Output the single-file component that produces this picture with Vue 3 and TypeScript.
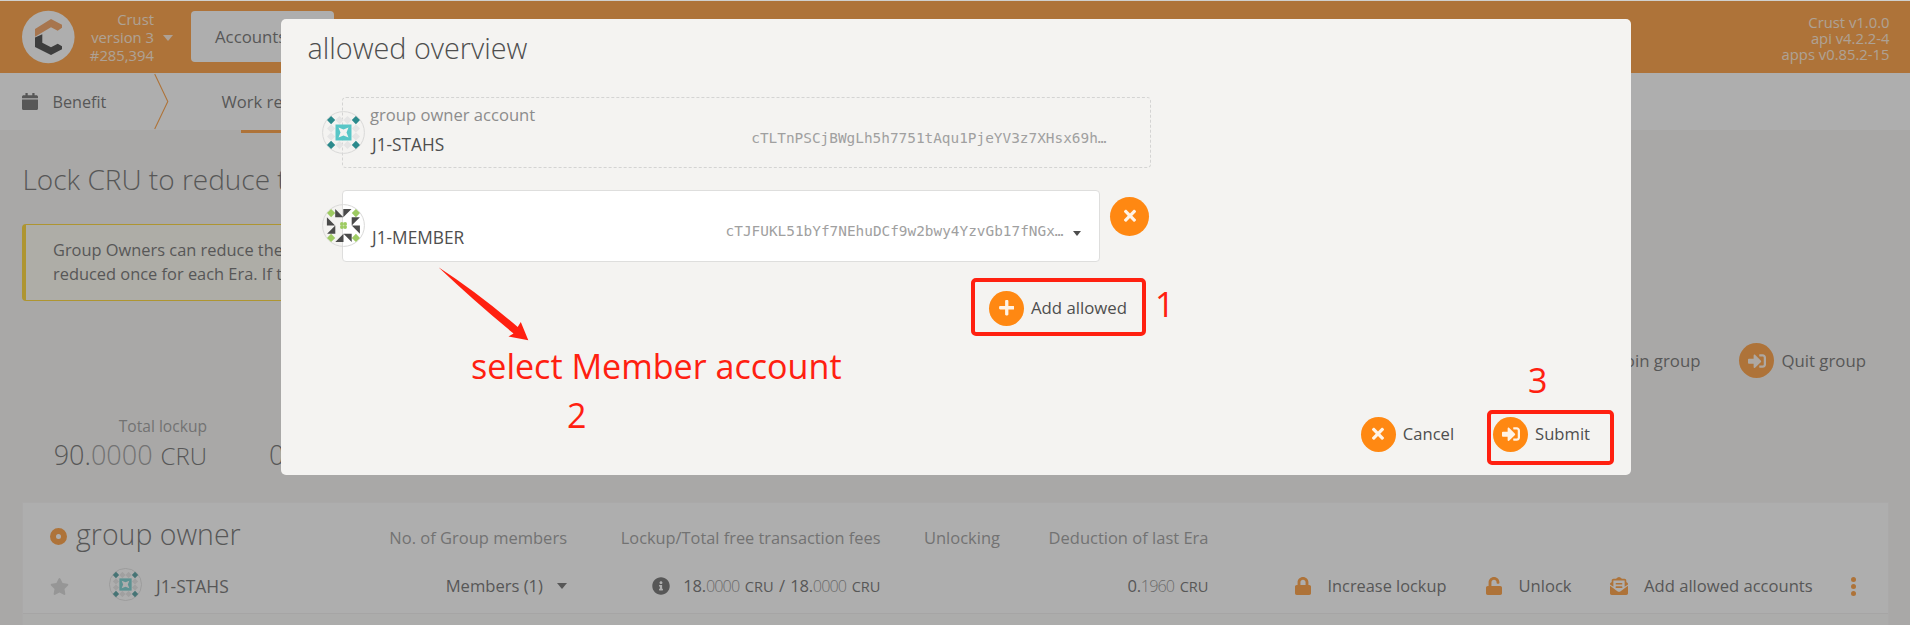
<script setup lang="ts">
interface Glyph { box: string; d: string }

const glyphs: Record<string, Glyph> = {
  lock: { box: '0 0 448 512', d: 'M400 224h-24v-72C376 68.2 307.8 0 224 0S72 68.2 72 152v72H48c-26.5 0-48 21.5-48 48v192c0 26.5 21.5 48 48 48h352c26.5 0 48-21.5 48-48V272c0-26.5-21.5-48-48-48zm-104 0H152v-72c0-39.7 32.3-72 72-72s72 32.3 72 72v72z' },
  unlock: { box: '0 0 448 512', d: 'M400 256H152V152.9c0-39.6 31.7-72.5 71.3-72.9 40-.4 72.7 32.1 72.7 72v16c0 13.3 10.7 24 24 24h32c13.3 0 24-10.7 24-24v-16C376 68 307.5-.3 223.5 0 139.5.3 72 69.5 72 153.5V256H48c-26.5 0-48 21.5-48 48v160c0 26.5 21.5 48 48 48h352c26.5 0 48-21.5 48-48V304c0-26.5-21.5-48-48-48z' },
  envelope: { box: '0 0 512 512', d: 'M176 216h160c8.84 0 16-7.16 16-16v-16c0-8.84-7.16-16-16-16H176c-8.84 0-16 7.16-16 16v16c0 8.84 7.16 16 16 16zm-16 80c0 8.84 7.16 16 16 16h160c8.84 0 16-7.16 16-16v-16c0-8.84-7.16-16-16-16H176c-8.84 0-16 7.16-16 16v16zm96 121.13c-16.42 0-32.84-5.06-46.86-15.19L0 250.86V464c0 26.51 21.49 48 48 48h416c26.51 0 48-21.49 48-48V250.86L302.86 401.94c-14.02 10.12-30.44 15.19-46.86 15.19zm237.61-254.18c-8.85-6.94-17.24-13.47-29.61-22.81V96c0-26.51-21.49-48-48-48h-77.55c-3.04-2.2-5.87-4.26-9.04-6.56C312.6 29.17 279.2-.35 256 0c-23.2-.35-56.59 29.17-73.41 41.44-3.17 2.3-6 4.36-9.04 6.56H96c-26.51 0-48 21.49-48 48v44.14c-12.37 9.33-20.76 15.87-29.61 22.81A47.995 47.995 0 0 0 0 200.72v10.65l96 69.35V96h320v184.72l96-69.35v-10.65c0-14.74-6.78-28.67-18.39-37.77z' },
  signIn: { box: '0 0 512 512', d: 'M416 448h-84c-6.6 0-12-5.4-12-12v-40c0-6.6 5.4-12 12-12h84c17.7 0 32-14.3 32-32V160c0-17.7-14.3-32-32-32h-84c-6.6 0-12-5.4-12-12V76c0-6.6 5.4-12 12-12h84c53 0 96 43 96 96v192c0 53-43 96-96 96zm-47-201L201 79c-15-15-41-4.5-41 17v96H24c-13.3 0-24 10.7-24 24v96c0 13.3 10.7 24 24 24h136v96c0 21.5 26 32 41 17l168-168c9.3-9.4 9.3-24.6 0-34z' },
  times: { box: '0 0 352 512', d: 'M242.72 256l100.07-100.07c12.28-12.28 12.28-32.19 0-44.48l-22.24-22.24c-12.28-12.28-32.19-12.28-44.48 0L176 189.28 75.93 89.21c-12.28-12.28-32.19-12.28-44.48 0L9.21 111.45c-12.28 12.28-12.28 32.19 0 44.48L109.28 256 9.21 356.07c-12.28 12.28-12.28 32.19 0 44.48l22.24 22.24c12.28 12.28 32.2 12.28 44.48 0L176 322.72l100.07 100.07c12.28 12.28 32.2 12.28 44.48 0l22.24-22.24c12.28-12.28 12.28-32.19 0-44.48L242.72 256z' },
  plus: { box: '0 0 448 512', d: 'M416 208H272V64c0-17.67-14.33-32-32-32h-32c-17.67 0-32 14.33-32 32v144H32c-17.67 0-32 14.33-32 32v32c0 17.67 14.33 32 32 32h144v144c0 17.67 14.33 32 32 32h32c17.67 0 32-14.33 32-32V304h144c17.67 0 32-14.33 32-32v-32c0-17.67-14.33-32-32-32z' },
  info: { box: '0 0 512 512', d: 'M256 8C119.043 8 8 119.083 8 256c0 136.997 111.043 248 248 248s248-111.003 248-248C504 119.083 392.957 8 256 8zm0 110c23.196 0 42 18.804 42 42s-18.804 42-42 42-42-18.804-42-42 18.804-42 42-42zm56 254c0 6.627-5.373 12-12 12h-88c-6.627 0-12-5.373-12-12v-24c0-6.627 5.373-12 12-12h12v-64h-12c-6.627 0-12-5.373-12-12v-24c0-6.627 5.373-12 12-12h64c6.627 0 12 5.373 12 12v100h12c6.627 0 12 5.373 12 12v24z' },
  star: { box: '0 0 576 512', d: 'M259.3 17.8L194 150.2 47.9 171.5c-26.2 3.8-36.7 36.1-17.7 54.6l105.7 103-25 145.5c-4.5 26.3 23.2 46 46.4 33.7L288 439.6l130.7 68.7c23.2 12.2 50.9-7.4 46.4-33.7l-25-145.5 105.7-103c19-18.5 8.5-50.8-17.7-54.6L382 150.2 316.7 17.8c-11.7-23.6-45.6-23.9-57.4 0z' },
  calendar: { box: '0 0 448 512', d: 'M12 192h424c6.6 0 12 5.4 12 12v260c0 26.5-21.5 48-48 48H48c-26.5 0-48-21.5-48-48V204c0-6.6 5.4-12 12-12zm436-44v-36c0-26.5-21.5-48-48-48h-48V12c0-6.6-5.4-12-12-12h-40c-6.6 0-12 5.4-12 12v52H160V12c0-6.6-5.4-12-12-12h-40c-6.6 0-12 5.4-12 12v52H48C21.5 64 0 85.5 0 112v36c0 6.6 5.4 12 12 12h424c6.6 0 12-5.4 12-12z' }
}

const corners = [[-12.4, -12.4], [12.4, -12.4], [-12.4, 12.4], [12.4, 12.4]]
const edges = [[-4, -12.4], [4, -12.4], [-4, 12.4], [4, 12.4], [-12.4, -4], [-12.4, 4], [12.4, -4], [12.4, 4]]
const diamond = ([x, y]: number[]) => `M${x} ${y - 4.1}L${x + 4.1} ${y}L${x} ${y + 4.1}L${x - 4.1} ${y}Z`
const cornerPath = corners.map(diamond).join('')
const edgePath = edges.map(diamond).join('')
</script>

<template>
  <div class="page">
    <div class="strip"></div>
    <header class="header">
      <svg class="logo" viewBox="0 0 54 54">
        <circle cx="27.3" cy="27" r="26.3" fill="#fff" />
        <path d="M14 19L30 9L41 14.7V17.7L36.7 20.7L30 17.3L14 26.7Z" fill="#f08c3c" />
        <path d="M14 27.5L21.3 24.3V32.7L30 37.3L36.7 33.7L41 36.3V39.3L30 45L14 37Z" fill="#1a1a1a" />
      </svg>
      <div class="chain"><span>Crust</span><span>version 3</span><span>#285,394</span></div>
      <i class="caret caret-light"></i>
      <div class="nav">Accounts</div>
      <div class="versions"><span>Crust v1.0.0</span><span>api v4.2.2-4</span><span>apps v0.85.2-15</span></div>
    </header>
    <nav class="tabs">
      <svg class="ico calendar" :viewBox="glyphs.calendar.box" preserveAspectRatio="none"><path :d="glyphs.calendar.d" /></svg>
      <span class="benefit">Benefit</span>
      <svg class="chevron" viewBox="0 0 15 57"><path d="M.7 1L13.8 28.5L.7 56" fill="none" stroke="#ff8812" stroke-width="1.1" /></svg>
      <span class="work">Work report</span>
    </nav>
    <h1>Lock CRU to reduce the fee</h1>
    <div class="notice">Group Owners can reduce the fee<br />reduced once for each Era. If the</div>
    <div class="actions">
      <span class="act"><b class="disc"><svg class="g-in" :viewBox="glyphs.signIn.box"><path :d="glyphs.signIn.d" /></svg></b>Join group</span>
      <span class="act"><b class="disc"><svg class="g-in" :viewBox="glyphs.signIn.box"><path :d="glyphs.signIn.d" /></svg></b>Quit group</span>
    </div>
    <div class="totals">
      <div class="total"><span class="label">Total lockup</span><span class="big">90.<i>0000</i><em>CRU</em></span></div>
      <div class="total second"><span class="label">Fees</span><span class="big">0.<i>0000</i><em>CRU</em></span></div>
    </div>
    <section class="card">
      <div class="row head">
        <div class="owner"><i class="ring"></i><span>group owner</span></div>
        <div>No. of Group members</div>
        <div class="fees">Lockup/Total free transaction fees</div>
        <div>Unlocking</div>
        <div>Deduction of last Era</div>
        <div></div>
      </div>
      <div class="row body">
        <div class="account">
          <svg class="ico star" :viewBox="glyphs.star.box"><path :d="glyphs.star.d" /></svg>
          <svg class="ident small" viewBox="-21.5 -21.5 43 43">
            <circle r="20.9" fill="none" stroke="#cfcfcf" />
            <path :d="edgePath" fill="#e3e3e3" /><path :d="cornerPath" fill="#2b8a8c" />
            <path d="M-8-8H8V8H-8Z" fill="#58c6c7" /><path d="M-5-5L0-3L5-5L3 0L5 5L0 3L-5 5L-3 0Z" fill="#fff" />
          </svg>
          <span class="name">J1-STAHS</span>
        </div>
        <div class="members">Members (1)<i class="caret"></i></div>
        <div class="amount"><svg class="ico info" :viewBox="glyphs.info.box"><path :d="glyphs.info.d" /></svg>18.<i>0000</i><em>CRU</em><span class="slash"> / </span>18.<i>0000</i><em>CRU</em></div>
        <div></div>
        <div class="amount">0.<i>1960</i><em>CRU</em></div>
        <div class="ops">
          <span class="op lock"><svg :viewBox="glyphs.lock.box" preserveAspectRatio="none"><path :d="glyphs.lock.d" /></svg>Increase lockup</span>
          <span class="op unlock"><svg :viewBox="glyphs.unlock.box" preserveAspectRatio="none"><path :d="glyphs.unlock.d" /></svg>Unlock</span>
          <span class="op mail"><svg :viewBox="glyphs.envelope.box"><path :d="glyphs.envelope.d" /></svg>Add allowed accounts</span>
          <span class="dots"><i></i><i></i><i></i></span>
        </div>
      </div>
      <div class="row next"></div>
    </section>
    <div class="dimmer"></div>

    <div class="modal">
      <h2>allowed overview</h2>
      <div class="field fixed">
        <svg class="ident" viewBox="-21.5 -21.5 43 43">
          <circle r="20.9" fill="none" stroke="#d9d9d8" />
          <path :d="edgePath" fill="#e5e5e5" /><path :d="cornerPath" fill="#2b8a8c" />
          <path d="M-8-8H8V8H-8Z" fill="#58c6c7" /><path d="M-5-5L0-3L5-5L3 0L5 5L0 3L-5 5L-3 0Z" fill="#f4f3f1" />
        </svg>
        <div class="who"><label>group owner account</label><span>J1-STAHS</span></div>
        <code>cTLTnPSCjBWgLh5h7751tAqu1PjeYV3z7XHsx69h…</code>
      </div>
      <div class="line">
        <div class="field select">
          <svg class="ident" viewBox="-21.5 -21.5 43 43">
            <circle r="20.9" fill="none" stroke="#d9d9d8" />
            <path :d="cornerPath" fill="#9ecb62" />
            <path d="M-8.3-16.4V-8.2H-.2ZM-.2-16.4H8V-16.4L-.2-8.2ZM-16.6-8.2V0H-8.4ZM-8.2 0V8.2H-16.4ZM8.2-8.2H16.4L8.2 0ZM8.2 0H16.4V8.2ZM0 8.2V16.4H-8.2ZM0 8.2H8.2V16.4Z" fill="#4a4a4a" />
            <g fill="#9ecb62"><circle cx="-1.6" cy="-1.6" r="1.9" /><circle cx="1.6" cy="-1.6" r="1.9" /><circle cx="-1.6" cy="1.6" r="1.9" /><circle cx="1.6" cy="1.6" r="1.9" /></g>
          </svg>
          <div class="who"><label>&nbsp;</label><span>J1-MEMBER</span></div>
          <code>cTJFUKL51bYf7NEhuDCf9w2bwy4YzvGb17fNGx…</code>
          <i class="caret tiny"></i>
        </div>
        <b class="disc remove"><svg class="g-x" :viewBox="glyphs.times.box"><path :d="glyphs.times.d" /></svg></b>
      </div>
      <div class="add"><span class="act"><b class="disc"><svg class="g-plus" :viewBox="glyphs.plus.box"><path :d="glyphs.plus.d" /></svg></b>Add allowed</span></div>
      <div class="buttons">
        <span class="act"><b class="disc"><svg class="g-x" :viewBox="glyphs.times.box"><path :d="glyphs.times.d" /></svg></b>Cancel</span>
        <span class="act"><b class="disc"><svg class="g-in" :viewBox="glyphs.signIn.box"><path :d="glyphs.signIn.d" /></svg></b>Submit</span>
      </div>
    </div>

    <div class="mark frame-add"></div>
    <div class="mark frame-submit"></div>
    <svg class="arrow" viewBox="0 0 92 76"><path d="M.5 .3Q40 26 79.7 60L82.8 55L90.3 73.2L70.5 69.5L75.5 66.5Q36 34 .5 .3Z" fill="#ff2010" /></svg>
    <span class="note n1">1</span>
    <span class="note n2">2</span>
    <span class="note n3">3</span>
    <span class="note hint">select Member account</span>
  </div>
</template>

<style>
html, body { margin: 0; overflow: hidden; }
</style>

<style scoped>
* { box-sizing: border-box; }
.page { position: relative; width: 1910px; height: 625px; overflow: hidden; background: #f5f3f1; color: #4e4e4e; font: 400 16.6px/24px "Open Sans", "Noto Sans", sans-serif; }
i, em { font-style: normal; }
svg { display: block; flex: none; fill: currentColor; }
.strip { position: relative; z-index: 2; height: 1px; background: #d0d0ce; }
.header { height: 72px; display: flex; align-items: flex-start; background: #ff8812; color: #fff; padding: 9px 20.5px 0 21px; }
.logo { width: 54px; height: 54px; }
.chain { width: 79px; margin-right: 1px; display: flex; flex-direction: column; align-items: flex-end; font-size: 14.8px; line-height: 18px; color: #ffe5cc; white-space: nowrap; }
.caret { width: 0; height: 0; flex: none; border: 5.5px solid transparent; border-top: 6px solid #4e4e4e; border-bottom: 0; }
.caret-light { border-top-color: #ffe5cc; margin: 25px 0 0 8px; }
.nav { margin: 1px 0 0 18px; width: 143px; height: 51px; border-radius: 4px; background: #fff; padding-left: 24px; line-height: 52px; font-size: 16.8px; color: #4e4e4e; }
.versions { margin: 4px 0 0 auto; display: flex; flex-direction: column; align-items: flex-end; font-size: 14.8px; line-height: 16px; color: #ffe5cc; }
.tabs { height: 57px; display: flex; align-items: center; background: #fff; position: relative; }
.calendar { width: 16px; height: 17px; margin: 0 14.5px 0 22px; }
.benefit { width: 101px; font-size: 16.2px; }
.chevron { width: 15px; height: 57px; margin-right: 53px; }
.work::after { content: ""; position: absolute; left: 241px; top: 57px; width: 120px; height: 3px; background: #ff8812; }
h1, h2 { margin: 0; font-weight: 300; font-size: 28px; line-height: 38px; }
h1 { padding: 30px 0 0 22.5px; }
.notice { margin: 26px 0 0 22px; width: 1200px; height: 77px; border: 1px solid #ffcc00; border-left-width: 4px; border-radius: 4px; background: #fefcf1; padding: 13px 27px; font-size: 16.4px; }
.actions { margin-top: 42px; padding-right: 44px; display: flex; justify-content: flex-end; gap: 39px; font-size: 16.8px; }
.act { display: inline-flex; align-items: center; gap: 7px; white-space: nowrap; }
.disc { width: 35px; height: 35px; border-radius: 50%; background: #ff8812; color: #fff3e6; display: flex; align-items: center; justify-content: center; }
.g-in { width: 18px; height: 18px; }
.g-x { width: 12px; height: 17.5px; }
.g-plus { width: 15.5px; height: 17.5px; }
.totals { display: flex; height: 58px; margin-top: 37px; padding-left: 54px; }
.total { width: 153px; display: flex; flex-direction: column; align-items: flex-end; }
.total.second { margin-left: 47px; }
.label { font-size: 15.6px; line-height: 22px; color: #868686; }
.big { font-weight: 300; font-size: 27px; line-height: 36px; white-space: nowrap; }
.big i { color: #868686; }
.big em { font-size: 24px; margin-left: 8px; }
.card { margin: 29px 21px 0 22px; height: 123px; background: #fff; border: solid #f6f5f4; border-width: 1px 1px 0; }
.row { display: grid; grid-template-columns: 359px 185px 313.5px 119.5px 208.5px 1fr; align-items: center; text-align: right; white-space: nowrap; }
.head { height: 62px; padding-top: 8px; font-size: 16.5px; color: #868686; }
.fees { font-size: 16.35px; }
.owner { display: flex; align-items: center; gap: 9px; padding-left: 27px; font-size: 28.5px; font-weight: 300; color: #4e4e4e; }
.owner span { margin-top: -9px; }
.ring { width: 17px; height: 17px; margin-top: -4px; border-radius: 50%; border: 6px solid #ff8812; }
.body { height: 49px; padding-bottom: 6px; border-bottom: 1px solid #eeedec; }
.account, .ops, .amount, .members { display: flex; align-items: center; }
.members, .amount { justify-content: flex-end; }
.members .caret { margin-left: 14px; }
.star { width: 19px; height: 17px; margin-left: 27px; color: #cfcfcf; }
.ident { width: 43px; height: 43px; }
.small { width: 33px; height: 33px; margin: -3px 14px 0 40px; }
.name { font-size: 17.4px; }
.info { width: 18px; height: 18px; margin-right: 13px; }
.amount { white-space: pre; letter-spacing: -.25px; }
.amount i { font-weight: 300; color: #777; letter-spacing: -.9px; font-size: 16.2px; }
.amount em { font-size: 14.6px; margin-left: 5.5px; letter-spacing: 0; }
.slash { word-spacing: 1.3px; }
.ops svg { height: 18px; }
.op { display: flex; align-items: center; }
.op svg { color: #ff8812; }
.lock svg { width: 16px; margin-right: 17px; }
.lock { margin-left: 86px; font-size: 16.35px; }
.unlock { margin-left: 39.5px; }
.unlock svg { width: 16px; margin-right: 16.5px; }
.mail { margin-left: 38.5px; }
.mail svg { width: 18px; margin-right: 16px; }
.dots { margin-left: 38.5px; display: flex; flex-direction: column; gap: 2px; }
.dots i { width: 5px; height: 5px; border-radius: 50%; background: #ff8812; }
.next { height: 11px; background: #fbfaf8; }
.dimmer { position: absolute; inset: 0; background: rgba(96, 96, 96, .51); }
.modal { position: absolute; left: 281px; top: 19px; width: 1350px; height: 456px; border-radius: 5px; background: #f4f3f1; padding: 10px 0 0 61px; }
h2 { margin-left: -34.5px; font-size: 28.8px; }
.field { position: relative; display: flex; align-items: flex-start; width: 809px; height: 71px; margin-top: 30px; border: 1px dashed #d4d4d3; border-radius: 4px; padding-left: 27px; }
.field .ident { position: absolute; left: -21.5px; top: 12.5px; }
.who { display: flex; flex-direction: column; }
.who label { line-height: 24px; margin-top: 5px; height: 30px; color: #8c8c8c; }
.who span { line-height: 24px; font-size: 17.3px; padding-left: 2px; }
.field code { margin: 28px 43.5px 0 auto; font: 14.4px/24px "DejaVu Sans Mono", monospace; color: #a0a0a0; }
.line { display: flex; margin-top: 22px; }
.select { margin-top: 0; width: 758px; height: 72px; border: 1px solid #dededd; background: #fff; }
.select code { margin-right: 9.5px; }
.tiny { border-width: 5px 4.5px 0; margin: 40px 18px 0 0; }
.remove { width: 39px; height: 39px; margin: 6.5px 0 0 10px; }
.add { width: 785px; display: flex; justify-content: flex-end; margin-top: 28.5px; font-size: 16.8px; }
.buttons { display: flex; justify-content: flex-end; gap: 39px; padding-right: 41px; margin-top: 91px; }
.mark { position: absolute; border: 4px solid #ff2010; border-radius: 5px; }
.frame-add { left: 971px; top: 278px; width: 175px; height: 58px; }
.frame-submit { left: 1487px; top: 410px; width: 127px; height: 55px; }
.arrow { position: absolute; left: 438px; top: 267px; width: 92px; height: 76px; }
.note { position: absolute; color: #ff2010; font-size: 34.1px; line-height: 46px; white-space: nowrap; }
.n1 { left: 1155px; top: 281px; }
.n2 { left: 567px; top: 392px; }
.n3 { left: 1528px; top: 357px; }
.hint { left: 471px; top: 343px; }
</style>
